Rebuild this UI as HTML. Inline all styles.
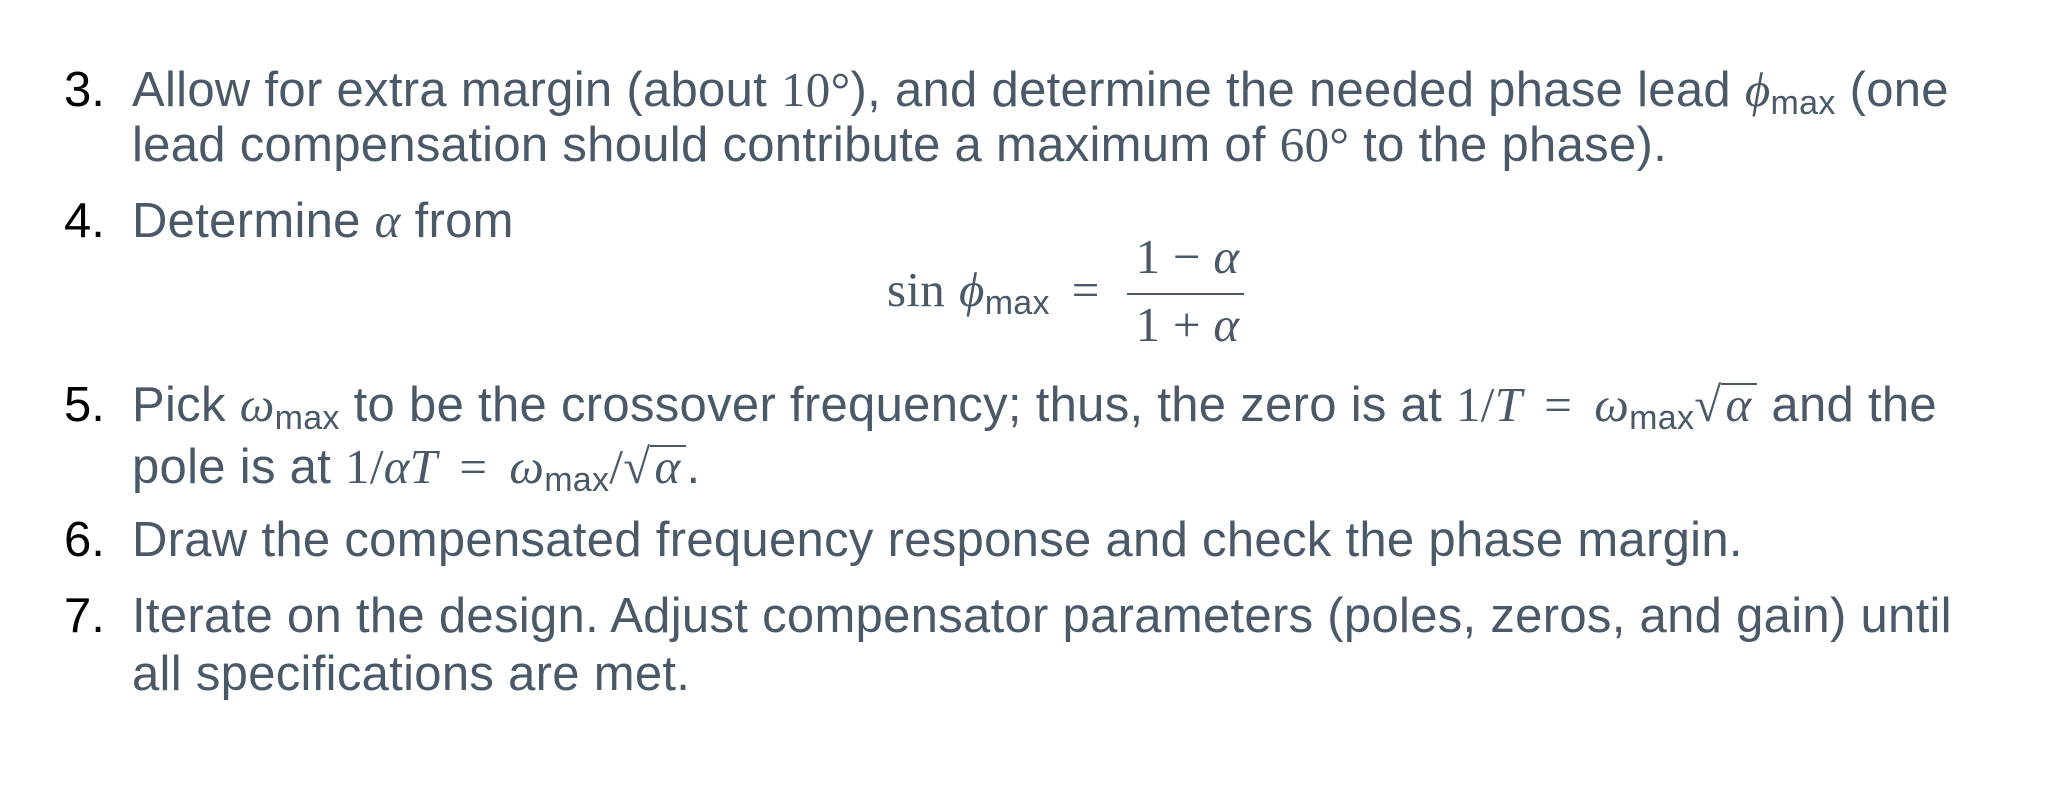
<!DOCTYPE html>
<html><head><meta charset="utf-8"><style>
html,body{margin:0;padding:0;background:#fff;width:2050px;height:791px;overflow:hidden}
.l{position:absolute;font-family:"Liberation Sans",sans-serif;font-size:49px;line-height:46px;color:#4b5868;white-space:nowrap;letter-spacing:0.3px}
.n{position:absolute;font-family:"Liberation Sans",sans-serif;font-size:49px;line-height:46px;color:#000}
.m{font-family:"Liberation Serif",serif;font-style:italic}
.r{font-family:"Liberation Serif",serif}
.eq{font-family:"Liberation Serif",serif;padding:0 22px}
sub{font-size:34px;vertical-align:-8px;line-height:0}
.sq{display:inline-block;border-top:2px solid #4b5868;line-height:40px;padding:0 6px 0 4px}
</style></head><body>
<div class="n" style="left:64px;top:67px">3.</div>
<div class="l" style="left:132px;top:67px">Allow for extra margin (about <span class="r">10°</span>), and determine the needed phase lead <span class="m">ϕ</span><sub>max</sub> (one</div>
<div class="l" style="left:132px;top:122px">lead compensation should contribute a maximum of <span class="r">60°</span> to the phase).</div>
<div class="n" style="left:64px;top:198px">4.</div>
<div class="l" style="left:132px;top:198px">Determine <span class="m">α</span> from</div>
<div class="l" style="left:887px;top:267px"><span class="r">sin</span> <span class="m">ϕ</span><sub>max</sub> <span class="r" style="margin-left:8px">=</span></div>
<div class="l r" style="left:1130px;top:234px;width:115px;text-align:center">1 − <span class="m">α</span></div>
<div style="position:absolute;left:1127px;top:293px;width:117px;height:2px;background:#4b5868"></div>
<div class="l r" style="left:1130px;top:302px;width:115px;text-align:center">1 + <span class="m">α</span></div>
<div class="n" style="left:64px;top:382px">5.</div>
<div class="l" style="left:132px;top:382px">Pick <span class="m">ω</span><sub>max</sub> to be the crossover frequency; thus, the zero is at <span class="r">1/</span><span class="m">T</span><span class="eq">=</span><span class="m">ω</span><sub>max</sub><span class="r">√</span><span class="sq m">α</span> and the</div>
<div class="l" style="left:132px;top:444px">pole is at <span class="r">1/</span><span class="m">αT</span><span class="eq">=</span><span class="m">ω</span><sub>max</sub><span class="r">/√</span><span class="sq m">α</span>.</div>
<div class="n" style="left:64px;top:517px">6.</div>
<div class="l" style="left:132px;top:517px">Draw the compensated frequency response and check the phase margin.</div>
<div class="n" style="left:64px;top:593px">7.</div>
<div class="l" style="left:132px;top:593px">Iterate on the design. Adjust compensator parameters (poles, zeros, and gain) until</div>
<div class="l" style="left:132px;top:651px">all specifications are met.</div>
</body></html>
